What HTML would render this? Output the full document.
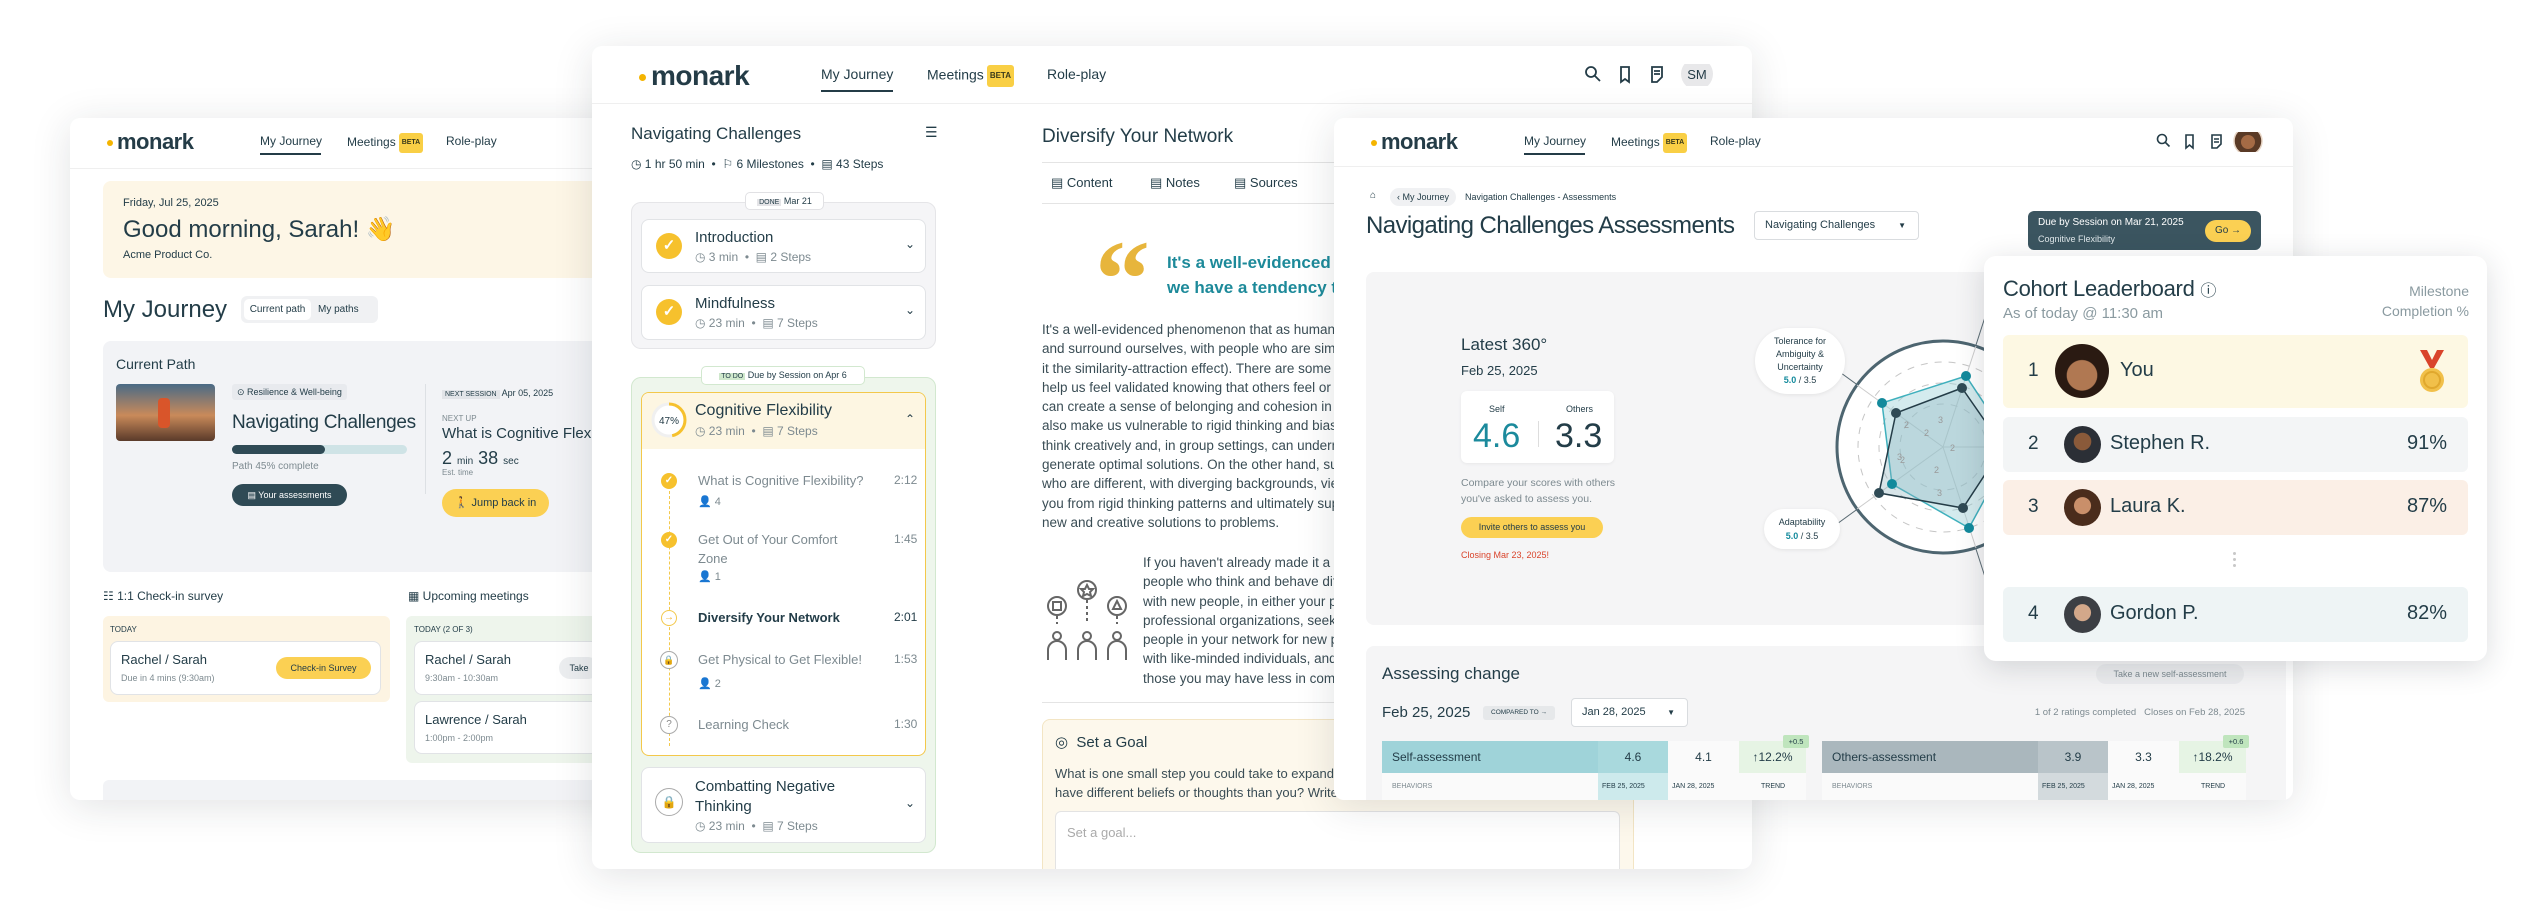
<!DOCTYPE html>
<html><head><meta charset="utf-8"><style>
*{box-sizing:border-box;margin:0;padding:0}
body{width:2538px;height:924px;background:#fff;position:relative;overflow:hidden;font-family:"Liberation Sans",sans-serif;color:#233d48}
.a{position:absolute;white-space:nowrap}
.win{position:absolute;background:#fff;border-radius:10px;overflow:hidden;box-shadow:0 6px 40px rgba(30,40,50,.13)}
.logo{font-weight:bold;letter-spacing:-.5px;color:#243c47}
.dot{position:absolute;border-radius:50%;background:#f4b400}
.beta{display:inline-block;background:#f9cf45;color:#3a3a1a;font-size:7px;font-weight:bold;padding:2px 3px;border-radius:3px;vertical-align:middle;margin-left:3px}
.g{color:#7d8a90}
.card{position:absolute;background:#fff;border:1px solid #e1e3e6;border-radius:8px}
.chk{position:absolute;border-radius:50%;background:#f6c12d;color:#fff;text-align:center;font-weight:bold}
</style></head><body>

<!-- WINDOW 1 -->
<div class="win" style="left:70px;top:118px;width:700px;height:682px">
 <div class="dot" style="left:37px;top:22px;width:6px;height:6px"></div>
 <div class="a logo" style="left:47px;top:11px;font-size:22px;line-height:26px">monark</div>
 <div class="a" style="left:190px;top:15px;font-size:12px;line-height:16px">My Journey</div>
 <div class="a" style="left:190px;top:35px;width:61px;height:2px;background:#243c47"></div>
 <div class="a" style="left:277px;top:15px;font-size:12px;line-height:16px">Meetings<span class="beta">BETA</span></div>
 <div class="a" style="left:376px;top:15px;font-size:12px;line-height:16px">Role-play</div>
 <div class="a" style="left:0;top:50px;width:700px;height:1px;background:#efefef"></div>
 <div class="a" style="left:33px;top:63px;width:700px;height:97px;background:#fdf6e6;border-radius:8px"></div>
 <div class="a" style="left:53px;top:79px;font-size:11px">Friday, Jul 25, 2025</div>
 <div class="a" style="left:53px;top:98px;font-size:24px;line-height:28px">Good morning, Sarah! 👋</div>
 <div class="a" style="left:53px;top:131px;font-size:11px">Acme Product Co.</div>
 <div class="a" style="left:33px;top:178px;font-size:24px;line-height:28px">My Journey</div>
 <div class="a" style="left:171px;top:178px;width:137px;height:27px;background:#f0f1f3;border-radius:6px"></div>
 <div class="a" style="left:174px;top:181px;width:67px;height:21px;background:#fff;border-radius:5px;font-size:10px;line-height:21px;text-align:center">Current path</div>
 <div class="a" style="left:248px;top:181px;font-size:10px;line-height:21px">My paths</div>
 <div class="a" style="left:33px;top:223px;width:700px;height:231px;background:#f2f3f6;border-radius:8px"></div>
 <div class="a" style="left:46px;top:238px;font-size:14px">Current Path</div>
 <div class="a" style="left:46px;top:266px;width:99px;height:57px;border-radius:4px;background:linear-gradient(180deg,#4a6a86 0%,#c98a5a 55%,#5a3a2a 100%)"></div>
 <div class="a" style="left:88px;top:280px;width:12px;height:30px;background:#d9552a;border-radius:4px"></div>
 <div class="a" style="left:162px;top:266px;height:16px;padding:0 5px;background:#e8eaee;border-radius:3px;font-size:9px;line-height:16px">⊙ Resilience &amp; Well-being</div>
 <div class="a" style="left:162px;top:294px;font-size:19px;line-height:22px;letter-spacing:-.3px">Navigating Challenges</div>
 <div class="a" style="left:162px;top:327px;width:175px;height:9px;background:#cfe3e6;border-radius:5px"></div>
 <div class="a" style="left:162px;top:327px;width:93px;height:9px;background:#2f4a55;border-radius:5px"></div>
 <div class="a g" style="left:162px;top:343px;font-size:10px">Path 45% complete</div>
 <div class="a" style="left:162px;top:366px;width:115px;height:22px;background:#2f4a55;border-radius:11px;color:#fff;font-size:9px;line-height:22px;text-align:center">▤ Your assessments</div>
 <div class="a" style="left:355px;top:266px;width:1px;height:110px;background:#dde0e4"></div>
 <div class="a" style="left:372px;top:268px;font-size:9px;line-height:14px"><span style="background:#e2e4e8;padding:1px 3px;font-size:7px">NEXT SESSION</span> Apr 05, 2025</div>
 <div class="a g" style="left:372px;top:296px;font-size:8px">NEXT UP</div>
 <div class="a" style="left:372px;top:307px;font-size:15px">What is Cognitive Flexibility?</div>
 <div class="a" style="left:372px;top:330px;font-size:18px">2 <span style="font-size:10px">min</span> 38 <span style="font-size:10px">sec</span></div>
 <div class="a g" style="left:372px;top:350px;font-size:8px">Est. time</div>
 <div class="a" style="left:372px;top:371px;width:107px;height:28px;background:#fbd053;border-radius:14px;font-size:11px;line-height:28px;text-align:center">🚶 Jump back in</div>
 <div class="a" style="left:33px;top:471px;font-size:12px">☷ 1:1 Check-in survey</div>
 <div class="a" style="left:338px;top:471px;font-size:12px">▦ Upcoming meetings</div>
 <div class="a" style="left:33px;top:498px;width:287px;height:86px;background:#fdf4e2;border-radius:6px"></div>
 <div class="a" style="left:40px;top:507px;font-size:8px">TODAY</div>
 <div class="card" style="left:40px;top:523px;width:271px;height:54px"></div>
 <div class="a" style="left:51px;top:534px;font-size:13px">Rachel / Sarah</div>
 <div class="a g" style="left:51px;top:555px;font-size:9px">Due in 4 mins (9:30am)</div>
 <div class="a" style="left:206px;top:539px;width:95px;height:22px;background:#fbd053;border-radius:11px;font-size:9px;line-height:22px;text-align:center">Check-in Survey</div>
 <div class="a" style="left:336px;top:498px;width:400px;height:147px;background:#eef5ec;border-radius:6px"></div>
 <div class="a" style="left:344px;top:507px;font-size:8px">TODAY (2 OF 3)</div>
 <div class="card" style="left:344px;top:523px;width:400px;height:54px"></div>
 <div class="a" style="left:355px;top:534px;font-size:13px">Rachel / Sarah</div>
 <div class="a g" style="left:355px;top:555px;font-size:9px">9:30am - 10:30am</div>
 <div class="a" style="left:489px;top:539px;width:40px;height:22px;background:#eceef0;border-radius:11px;font-size:9px;line-height:22px;text-align:center">Take</div>
 <div class="card" style="left:344px;top:583px;width:400px;height:53px"></div>
 <div class="a" style="left:355px;top:594px;font-size:13px">Lawrence / Sarah</div>
 <div class="a g" style="left:355px;top:615px;font-size:9px">1:00pm - 2:00pm</div>
 <div class="a" style="left:33px;top:662px;width:700px;height:30px;background:#f2f3f6;border-radius:6px"></div>
</div>

<!-- WINDOW 2 -->
<div class="win" style="left:592px;top:46px;width:1160px;height:823px">
 <div class="dot" style="left:47px;top:28px;width:7px;height:7px"></div>
 <div class="a logo" style="left:59px;top:14px;font-size:28px;line-height:32px">monark</div>
 <div class="a" style="left:229px;top:19px;font-size:14px;line-height:18px">My Journey</div>
 <div class="a" style="left:229px;top:44px;width:72px;height:2px;background:#243c47"></div>
 <div class="a" style="left:335px;top:19px;font-size:14px;line-height:18px">Meetings<span class="beta" style="font-size:8px">BETA</span></div>
 <div class="a" style="left:455px;top:19px;font-size:14px;line-height:18px">Role-play</div>
 <svg class="a" style="left:991px;top:18px" width="130" height="22" viewBox="0 0 130 22" fill="none" stroke="#243c47" stroke-width="1.8"><circle cx="8" cy="8" r="5"/><path d="M12 12l5 5"/><path d="M38 3h8v15l-4-3-4 3z"/><path d="M69 3h10v10l-5 5h-5zM71 7h6M71 10h6"/><circle cx="114" cy="10" r="16" fill="#e8e8ea" stroke="none"/><text x="114" y="15" font-size="13" fill="#243c47" stroke="none" text-anchor="middle" font-family="Liberation Sans">SM</text></svg>
 <div class="a" style="left:0;top:57px;width:1160px;height:1px;background:#efefef"></div>
 <div class="a" style="left:39px;top:78px;font-size:17px;line-height:20px">Navigating Challenges</div>
 <div class="a" style="left:333px;top:78px;font-size:14px">☰</div>
 <div class="a" style="left:39px;top:110px;font-size:12px;line-height:16px">◷ 1 hr 50 min &nbsp;•&nbsp; ⚐ 6 Milestones &nbsp;•&nbsp; ▤ 43 Steps</div>
 <div class="a" style="left:39px;top:156px;width:305px;height:147px;background:#f5f5f7;border:1px solid #e5e5e8;border-radius:10px"></div>
 <div class="a" style="left:153px;top:146px;width:79px;height:18px;background:#fff;border:1px solid #e1e1e4;border-radius:5px;font-size:9px;line-height:16px;text-align:center"><span style="background:#e4e4e7;padding:0 2px;font-size:7px">DONE</span> Mar 21</div>
 <div class="card" style="left:49px;top:173px;width:285px;height:54px"></div>
 <div class="chk" style="left:64px;top:187px;width:26px;height:26px;font-size:15px;line-height:26px">✓</div>
 <div class="a" style="left:103px;top:183px;font-size:15px">Introduction</div>
 <div class="a g" style="left:103px;top:204px;font-size:12px">◷ 3 min &nbsp;•&nbsp; ▤ 2 Steps</div>
 <div class="a" style="left:313px;top:191px;font-size:12px">⌄</div>
 <div class="card" style="left:49px;top:239px;width:285px;height:55px"></div>
 <div class="chk" style="left:64px;top:253px;width:26px;height:26px;font-size:15px;line-height:26px">✓</div>
 <div class="a" style="left:103px;top:249px;font-size:15px">Mindfulness</div>
 <div class="a g" style="left:103px;top:270px;font-size:12px">◷ 23 min &nbsp;•&nbsp; ▤ 7 Steps</div>
 <div class="a" style="left:313px;top:257px;font-size:12px">⌄</div>
 <div class="a" style="left:39px;top:331px;width:305px;height:476px;background:#eef6ec;border:1px solid #d2e8cf;border-radius:10px"></div>
 <div class="a" style="left:109px;top:320px;width:164px;height:19px;background:#fff;border:1px solid #d2e8cf;border-radius:5px;font-size:9px;line-height:17px;text-align:center"><span style="background:#cfe8cc;padding:0 2px;font-size:7px">TO DO</span> Due by Session on Apr 6</div>
 <div class="a" style="left:49px;top:346px;width:285px;height:364px;background:#fff;border:1.5px solid #f3c84b;border-radius:8px;overflow:hidden"><div style="height:56px;background:#fdf6e2"></div></div>
 <svg class="a" style="left:58px;top:355px" width="38" height="38"><circle cx="19" cy="19" r="16" fill="#fff" stroke="#f0f0f0" stroke-width="3"/><circle cx="19" cy="19" r="16" fill="none" stroke="#f6c12d" stroke-width="3" stroke-dasharray="47 101" transform="rotate(-90 19 19)"/><text x="19" y="23" font-size="10" text-anchor="middle" fill="#243c47" font-family="Liberation Sans">47%</text></svg>
 <div class="a" style="left:103px;top:356px;font-size:16px">Cognitive Flexibility</div>
 <div class="a g" style="left:103px;top:378px;font-size:12px">◷ 23 min &nbsp;•&nbsp; ▤ 7 Steps</div>
 <div class="a" style="left:313px;top:366px;font-size:12px">⌃</div>
 <div class="a" style="left:77px;top:445px;height:255px;border-left:1px dashed #f3c84b"></div>
 <div class="chk" style="left:69px;top:427px;width:16px;height:16px;font-size:10px;line-height:16px">✓</div>
 <div class="a g" style="left:106px;top:427px;font-size:13px">What is Cognitive Flexibility?</div><div class="a g" style="left:302px;top:427px;font-size:12px">2:12</div>
 <div class="a g" style="left:106px;top:449px;font-size:11px">👤 4</div>
 <div class="chk" style="left:69px;top:486px;width:16px;height:16px;font-size:10px;line-height:16px">✓</div>
 <div class="a g" style="left:106px;top:486px;font-size:13px">Get Out of Your Comfort</div><div class="a g" style="left:302px;top:486px;font-size:12px">1:45</div>
 <div class="a g" style="left:106px;top:505px;font-size:13px">Zone</div>
 <div class="a g" style="left:106px;top:524px;font-size:11px">👤 1</div>
 <div class="a" style="left:69px;top:564px;width:16px;height:16px;border:1px solid #f3c84b;border-radius:50%;background:#fff;color:#f3b02b;font-size:10px;line-height:14px;text-align:center">→</div>
 <div class="a" style="left:106px;top:564px;font-size:13px;font-weight:bold">Diversify Your Network</div><div class="a" style="left:302px;top:564px;font-size:12px">2:01</div>
 <div class="a" style="left:68px;top:605px;width:18px;height:18px;border:1px solid #aaa;border-radius:50%;background:#fff;font-size:9px;line-height:16px;text-align:center;color:#888">🔒</div>
 <div class="a g" style="left:106px;top:606px;font-size:13px">Get Physical to Get Flexible!</div><div class="a g" style="left:302px;top:606px;font-size:12px">1:53</div>
 <div class="a g" style="left:106px;top:631px;font-size:11px">👤 2</div>
 <div class="a" style="left:68px;top:670px;width:18px;height:18px;border:1px solid #aaa;border-radius:50%;background:#fff;font-size:10px;line-height:16px;text-align:center;color:#888">?</div>
 <div class="a g" style="left:106px;top:671px;font-size:13px">Learning Check</div><div class="a g" style="left:302px;top:671px;font-size:12px">1:30</div>
 <div class="card" style="left:49px;top:721px;width:285px;height:76px"></div>
 <div class="a" style="left:63px;top:742px;width:28px;height:28px;border:1px solid #aaa;border-radius:50%;font-size:12px;line-height:26px;text-align:center">🔒</div>
 <div class="a" style="left:103px;top:732px;font-size:15px">Combatting Negative</div>
 <div class="a" style="left:103px;top:752px;font-size:15px">Thinking</div>
 <div class="a g" style="left:103px;top:773px;font-size:12px">◷ 23 min &nbsp;•&nbsp; ▤ 7 Steps</div>
 <div class="a" style="left:313px;top:750px;font-size:12px">⌄</div>
 <div class="a" style="left:450px;top:80px;font-size:19px;line-height:22px">Diversify Your Network</div>
 <div class="a" style="left:450px;top:116px;width:710px;height:1px;background:#e4e4e4"></div>
 <div class="a" style="left:459px;top:129px;font-size:13px">▤ Content</div>
 <div class="a" style="left:558px;top:129px;font-size:13px">▤ Notes</div>
 <div class="a" style="left:642px;top:129px;font-size:13px">▤ Sources</div>
 <div class="a" style="left:450px;top:157px;width:710px;height:1px;background:#e4e4e4"></div>
 <div class="a" style="left:503px;top:178px;font-size:110px;line-height:110px;font-family:'Liberation Serif',serif;font-weight:bold;color:#e7b53c">“</div>
 <div class="a" style="left:575px;top:204px;font-size:17px;font-weight:bold;color:#1d8a9a;line-height:25px">It's a well-evidenced phenomenon that as humans<br>we have a tendency to connect with similar people</div>
 <div class="a" style="left:450px;top:274px;font-size:13.5px;line-height:19.3px;color:#3a4d55">It's a well-evidenced phenomenon that as humans we tend to connect with,<br>and surround ourselves, with people who are similar to us (psychologists call<br>it the similarity-attraction effect). There are some benefits to this; it can<br>help us feel validated knowing that others feel or think similarly to us and it<br>can create a sense of belonging and cohesion in groups. However, it can<br>also make us vulnerable to rigid thinking and bias, and limit our ability to<br>think creatively and, in group settings, can undermine our ability to<br>generate optimal solutions. On the other hand, surrounding ourselves with people<br>who are different, with diverging backgrounds, viewpoints, and expertise can free<br>you from rigid thinking patterns and ultimately support you in finding<br>new and creative solutions to problems.</div>
 <svg class="a" style="left:453px;top:530px" width="85" height="88" viewBox="0 0 85 88" fill="none" stroke="#666" stroke-width="2"><circle cx="12" cy="30" r="9"/><rect x="8" y="26" width="8" height="8"/><circle cx="42" cy="14" r="9"/><path d="M42 9l2 4h4l-3 3 1 4-4-2-4 2 1-4-3-3h4z"/><circle cx="72" cy="30" r="9"/><path d="M72 25l4 8h-8z"/><path d="M12 40v8M42 24v24M72 40v8" stroke-dasharray="3 3"/><circle cx="12" cy="60" r="4"/><circle cx="42" cy="60" r="4"/><circle cx="72" cy="60" r="4"/><path d="M3 84v-10a9 9 0 0118 0v10M33 84v-10a9 9 0 0118 0v10M63 84v-10a9 9 0 0118 0v10"/></svg>
 <div class="a" style="left:551px;top:507px;font-size:13.5px;line-height:19.3px;color:#3a4d55">If you haven't already made it a habit, consider seeking out<br>people who think and behave differently from you. Connect<br>with new people, in either your personal network or through<br>professional organizations, seek out and engage with<br>people in your network for new perspectives. Rather than<br>with like-minded individuals, and actively seek out<br>those you may have less in common with.</div>
 <div class="a" style="left:450px;top:656px;width:710px;height:1px;background:#e4e4e4"></div>
 <div class="a" style="left:450px;top:673px;width:592px;height:170px;background:#fdf8ec;border:1px solid #f3e5c4;border-radius:8px"></div>
 <div class="a" style="left:463px;top:687px;font-size:15px">◎ &nbsp;Set a Goal</div>
 <div class="a" style="left:463px;top:718px;font-size:13px;line-height:19px;color:#3a4d55">What is one small step you could take to expand your network with people who<br>have different beliefs or thoughts than you? Write it down.</div>
 <div class="a" style="left:463px;top:765px;width:565px;height:70px;background:#fff;border:1px solid #e3e3e3;border-radius:6px"></div>
 <div class="a g" style="left:475px;top:779px;font-size:13px;color:#aaa">Set a goal...</div>
</div>

<!-- WINDOW 3 -->
<div class="win" style="left:1334px;top:118px;width:959px;height:682px">
 <div class="dot" style="left:37px;top:22px;width:6px;height:6px"></div>
 <div class="a logo" style="left:47px;top:11px;font-size:22px;line-height:26px">monark</div>
 <div class="a" style="left:190px;top:15px;font-size:12px;line-height:16px">My Journey</div>
 <div class="a" style="left:190px;top:35px;width:61px;height:2px;background:#243c47"></div>
 <div class="a" style="left:277px;top:15px;font-size:12px;line-height:16px">Meetings<span class="beta">BETA</span></div>
 <div class="a" style="left:376px;top:15px;font-size:12px;line-height:16px">Role-play</div>
 <svg class="a" style="left:821px;top:14px" width="110" height="20" viewBox="0 0 110 20" fill="none" stroke="#243c47" stroke-width="1.6"><circle cx="7" cy="7" r="4.5"/><path d="M10.5 10.5l4 4"/><path d="M31 3h7v13l-3.5-3-3.5 3z"/><path d="M57 3h9v9l-4 4h-5zM59 7h5M59 10h5"/><circle cx="93" cy="9" r="14" fill="#5a3a26" stroke="#e8d6c6" stroke-width="1.5"/><circle cx="93" cy="10" r="7" fill="#a56b45" stroke="none"/></svg>
 <div class="a" style="left:0;top:48px;width:959px;height:1px;background:#efefef"></div>
 <div class="a" style="left:36px;top:72px;font-size:10px">⌂</div>
 <div class="a" style="left:56px;top:70px;width:66px;height:18px;background:#f0f1f3;border-radius:9px;font-size:9px;line-height:18px;text-align:center">‹ My Journey</div>
 <div class="a" style="left:131px;top:74px;font-size:9px">Navigation Challenges - Assessments</div>
 <div class="a" style="left:32px;top:94px;font-size:24px;line-height:28px;letter-spacing:-.6px">Navigating Challenges Assessments</div>
 <div class="a" style="left:420px;top:93px;width:165px;height:29px;background:#fff;border:1px solid #d9dcdf;border-radius:4px;font-size:11px;line-height:27px;padding-left:10px">Navigating Challenges<span style="position:absolute;right:12px;font-size:8px">▼</span></div>
 <div class="a" style="left:694px;top:93px;width:233px;height:39px;background:#3b5560;border-radius:6px"></div>
 <div class="a" style="left:704px;top:99px;font-size:10px;color:#fff">Due by Session on Mar 21, 2025</div>
 <div class="a" style="left:704px;top:116px;font-size:9px;color:#dfe7ea">Cognitive Flexibility</div>
 <div class="a" style="left:871px;top:102px;width:46px;height:22px;background:#fbd053;border-radius:11px;font-size:10px;line-height:22px;text-align:center">Go →</div>
 <div class="a" style="left:32px;top:154px;width:920px;height:353px;background:#f5f5f6;border-radius:8px"></div>
 <div class="a" style="left:127px;top:217px;font-size:17px">Latest 360°</div>
 <div class="a" style="left:127px;top:245px;font-size:13px">Feb 25, 2025</div>
 <div class="a" style="left:127px;top:273px;width:153px;height:72px;background:#fff;border-radius:6px;box-shadow:0 1px 3px rgba(0,0,0,.06)"></div>
 <div class="a" style="left:155px;top:286px;font-size:9px">Self</div>
 <div class="a" style="left:232px;top:286px;font-size:9px">Others</div>
 <div class="a" style="left:139px;top:299px;font-size:34px;line-height:38px;color:#1b8a9c">4.6</div>
 <div class="a" style="left:221px;top:299px;font-size:34px;line-height:38px">3.3</div>
 <div class="a" style="left:204px;top:303px;width:1px;height:26px;background:#ddd"></div>
 <div class="a g" style="left:127px;top:357px;font-size:10.5px;line-height:16px">Compare your scores with others<br>you've asked to assess you.</div>
 <div class="a" style="left:127px;top:399px;width:142px;height:21px;background:#fbd053;border-radius:11px;font-size:9px;line-height:21px;text-align:center">Invite others to assess you</div>
 <div class="a" style="left:127px;top:432px;font-size:9px;color:#d9442b">Closing Mar 23, 2025!</div>
 <svg class="a" style="left:400px;top:154px" width="420" height="353" viewBox="400 154 420 353">
  <g stroke="#596a72" stroke-width="1"><line x1="609" y1="329" x2="652" y2="196"/><line x1="609" y1="329" x2="496" y2="247"/><line x1="609" y1="329" x2="496" y2="411"/><line x1="609" y1="329" x2="652" y2="462"/><line x1="609" y1="329" x2="760" y2="329"/></g>
  <circle cx="609" cy="329" r="106" fill="#fff" stroke="#4d6570" stroke-width="3"/>
  <g fill="none" stroke="#c5c5c5" stroke-dasharray="7 7"><circle cx="609" cy="329" r="85"/><circle cx="609" cy="329" r="64"/><circle cx="609" cy="329" r="43"/></g>
  <g stroke="#ccc"><line x1="609" y1="329" x2="642" y2="228"/><line x1="609" y1="329" x2="523" y2="267"/><line x1="609" y1="329" x2="523" y2="391"/><line x1="609" y1="329" x2="642" y2="430"/><line x1="609" y1="329" x2="715" y2="329"/></g>
  <polygon points="632,258 548,285 558,366 635,410 679,329" fill="#9fd3d9" fill-opacity=".45" stroke="#3fb0bd" stroke-width="1.5"/>
  <polygon points="628,270 562,295 545,375 629,390 669,329" fill="#8db3bd" fill-opacity=".35" stroke="#243c47" stroke-width="1.5"/>
  <g fill="#138a9c"><circle cx="632" cy="258" r="5"/><circle cx="548" cy="285" r="5"/><circle cx="558" cy="366" r="5"/><circle cx="635" cy="410" r="5"/></g>
  <g fill="#2f4a55"><circle cx="628" cy="270" r="5"/><circle cx="562" cy="295" r="5"/><circle cx="545" cy="375" r="5"/><circle cx="629" cy="390" r="5"/></g>
  <g font-size="9" fill="#999" font-family="Liberation Sans"><text x="604" y="305">3</text><text x="590" y="318">2</text><text x="570" y="310">2</text><text x="566" y="345">2</text><text x="600" y="355">2</text><text x="616" y="333">2</text><text x="603" y="378">3</text><text x="563" y="342">3</text></g>
 </svg>
 <div class="a" style="left:421px;top:210px;width:90px;height:66px;background:#fff;border-radius:33px;box-shadow:0 1px 4px rgba(0,0,0,.08);font-size:9px;line-height:13px;text-align:center;padding-top:7px">Tolerance for<br>Ambiguity &amp;<br>Uncertainty<br><b style="color:#138a9c">5.0</b> / 3.5</div>
 <div class="a" style="left:430px;top:391px;width:76px;height:40px;background:#fff;border-radius:20px;box-shadow:0 1px 4px rgba(0,0,0,.08);font-size:9px;line-height:14px;text-align:center;padding-top:6px">Adaptability<br><b style="color:#138a9c">5.0</b> / 3.5</div>
 <div class="a" style="left:32px;top:528px;width:920px;height:170px;background:#f5f5f6;border-radius:8px"></div>
 <div class="a" style="left:48px;top:546px;font-size:17px">Assessing change</div>
 <div class="a g" style="left:762px;top:546px;width:148px;height:20px;background:#ebecee;border-radius:10px;font-size:9px;line-height:20px;text-align:center">Take a new self-assessment</div>
 <div class="a" style="left:48px;top:586px;font-size:15px">Feb 25, 2025</div>
 <div class="a" style="left:149px;top:588px;width:72px;height:14px;background:#e6e8ea;border-radius:3px;font-size:6.5px;line-height:14px;text-align:center">COMPARED TO →</div>
 <div class="a" style="left:237px;top:580px;width:117px;height:29px;background:#fff;border:1px solid #d9dcdf;border-radius:4px;font-size:11px;line-height:27px;padding-left:10px">Jan 28, 2025<span style="position:absolute;right:12px;font-size:8px">▼</span></div>
 <div class="a g" style="right:48px;top:589px;font-size:9.5px">1 of 2 ratings completed &nbsp; Closes on Feb 28, 2025</div>
 <div class="a" style="left:48px;top:623px;width:216px;height:32px;background:#9fd3d9;font-size:12px;line-height:32px;padding-left:10px">Self-assessment</div>
 <div class="a" style="left:264px;top:623px;width:70px;height:32px;background:#a9d9dd;font-size:12px;line-height:32px;text-align:center">4.6</div>
 <div class="a" style="left:334px;top:623px;width:71px;height:32px;background:#fafafa;font-size:12px;line-height:32px;text-align:center">4.1</div>
 <div class="a" style="left:405px;top:623px;width:67px;height:32px;background:#e6f4e4;font-size:12px;line-height:32px;text-align:center">↑12.2%</div>
 <div class="a" style="left:449px;top:617px;width:26px;height:13px;background:#bfe5bd;border-radius:2px;font-size:7.5px;line-height:13px;text-align:center">+0.5</div>
 <div class="a" style="left:48px;top:655px;width:424px;height:27px;background:#fafafa"></div>
 <div class="a" style="left:264px;top:655px;width:70px;height:27px;background:#cdeaec"></div>
 <div class="a g" style="left:58px;top:665px;font-size:7px">BEHAVIORS</div>
 <div class="a" style="left:268px;top:665px;font-size:7px">FEB 25, 2025</div>
 <div class="a" style="left:338px;top:665px;font-size:7px">JAN 28, 2025</div>
 <div class="a" style="left:427px;top:665px;font-size:7px">TREND</div>
 <div class="a" style="left:488px;top:623px;width:216px;height:32px;background:#aab7bd;font-size:12px;line-height:32px;padding-left:10px">Others-assessment</div>
 <div class="a" style="left:704px;top:623px;width:70px;height:32px;background:#b9c4c9;font-size:12px;line-height:32px;text-align:center">3.9</div>
 <div class="a" style="left:774px;top:623px;width:71px;height:32px;background:#fafafa;font-size:12px;line-height:32px;text-align:center">3.3</div>
 <div class="a" style="left:845px;top:623px;width:67px;height:32px;background:#e6f4e4;font-size:12px;line-height:32px;text-align:center">↑18.2%</div>
 <div class="a" style="left:889px;top:617px;width:26px;height:13px;background:#bfe5bd;border-radius:2px;font-size:7.5px;line-height:13px;text-align:center">+0.6</div>
 <div class="a" style="left:488px;top:655px;width:424px;height:27px;background:#fafafa"></div>
 <div class="a" style="left:704px;top:655px;width:70px;height:27px;background:#d3dadd"></div>
 <div class="a g" style="left:498px;top:665px;font-size:7px">BEHAVIORS</div>
 <div class="a" style="left:708px;top:665px;font-size:7px">FEB 25, 2025</div>
 <div class="a" style="left:778px;top:665px;font-size:7px">JAN 28, 2025</div>
 <div class="a" style="left:867px;top:665px;font-size:7px">TREND</div>
</div>

<!-- LEADERBOARD -->
<div class="win" style="left:1984px;top:256px;width:503px;height:405px;border-radius:12px;box-shadow:0 6px 30px rgba(30,40,50,.16)">
 <div class="a" style="left:19px;top:20px;font-size:22px;line-height:26px;letter-spacing:-.3px">Cohort Leaderboard <span style="font-size:16px">ⓘ</span></div>
 <div class="a" style="left:19px;top:49px;font-size:15px;color:#8a9aa0">As of today @ 11:30 am</div>
 <div class="a" style="right:18px;top:25px;font-size:14px;line-height:20px;color:#8a9aa0;text-align:right">Milestone<br>Completion %</div>
 <div class="a" style="left:19px;top:79px;width:465px;height:73px;background:#fdf8e3;border-radius:6px"></div>
 <div class="a" style="left:44px;top:104px;font-size:19px">1</div>
 <div class="a" style="left:71px;top:88px;width:54px;height:54px;border-radius:50%;background:radial-gradient(circle at 50% 58%,#b07852 0 36%,#2a1a12 38%)"></div>
 <div class="a" style="left:136px;top:103px;font-size:20px">You</div>
 <svg class="a" style="left:433px;top:94px" width="30" height="46"><path d="M3 0l10 18h4L27 0h-7l-5 10-5-10z" fill="#d9442b"/><circle cx="15" cy="30" r="12" fill="#f1c04a"/><circle cx="15" cy="30" r="8" fill="none" stroke="#e0a82e" stroke-width="2"/></svg>
 <div class="a" style="left:19px;top:161px;width:465px;height:55px;background:#f3f5f6;border-radius:6px"></div>
 <div class="a" style="left:44px;top:177px;font-size:19px">2</div>
 <div class="a" style="left:80px;top:170px;width:37px;height:37px;border-radius:50%;background:radial-gradient(circle at 50% 42%,#8a5a3a 0 30%,#2b2f36 32%)"></div>
 <div class="a" style="left:126px;top:176px;font-size:20px">Stephen R.</div>
 <div class="a" style="right:40px;top:176px;font-size:20px">91%</div>
 <div class="a" style="left:19px;top:224px;width:465px;height:55px;background:#fbefe6;border-radius:6px"></div>
 <div class="a" style="left:44px;top:240px;font-size:19px">3</div>
 <div class="a" style="left:80px;top:233px;width:37px;height:37px;border-radius:50%;background:radial-gradient(circle at 50% 45%,#c98f6a 0 30%,#4a2c1c 32%)"></div>
 <div class="a" style="left:126px;top:239px;font-size:20px">Laura K.</div>
 <div class="a" style="right:40px;top:239px;font-size:20px">87%</div>
 <div class="a" style="left:249px;top:296px;width:3px;height:3px;background:#c8c8c8;border-radius:50%;box-shadow:0 6px 0 #c8c8c8,0 12px 0 #c8c8c8"></div>
 <div class="a" style="left:19px;top:331px;width:465px;height:55px;background:#eef4f5;border-radius:6px"></div>
 <div class="a" style="left:44px;top:347px;font-size:19px">4</div>
 <div class="a" style="left:80px;top:340px;width:37px;height:37px;border-radius:50%;background:radial-gradient(circle at 50% 45%,#d3a88a 0 30%,#3c3f44 32%)"></div>
 <div class="a" style="left:126px;top:346px;font-size:20px">Gordon P.</div>
 <div class="a" style="right:40px;top:346px;font-size:20px">82%</div>
</div>
</body></html>
